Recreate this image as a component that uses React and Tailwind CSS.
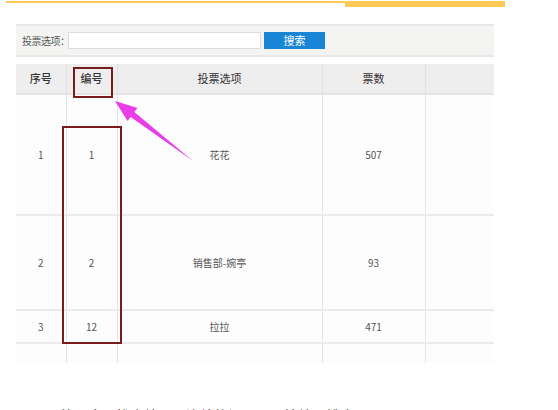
import React from 'react';

const COLS = ['w-[50px]', 'w-[51px]', 'w-[205px]', 'w-[103px]', 'w-[69px]'];

const ROWS = [
  { seq: '1', no: '1', name: '花花', votes: '507', h: 'h-[121px]' },
  { seq: '2', no: '2', name: '销售部-婉亭', votes: '93', h: 'h-[95px]' },
  { seq: '3', no: '12', name: '拉拉', votes: '471', h: 'h-[33px]' },
];

const font = { fontFamily: '"Noto Sans CJK SC", "Liberation Sans", sans-serif' };

export default function App() {
  return (
    <div className="relative w-[558px] h-[410px] overflow-hidden bg-white text-[#444]" style={font}>
      {/* top accent line */}
      <div className="flex items-start pl-[6px] pt-[1px]">
        <div className="w-[339px] h-[2px] bg-[#ffc955]" />
        <div className="w-[160px] h-[6px] bg-[#ffc955]" />
      </div>

      <div className="ml-[16px] w-[478px] mt-[17px]">
        {/* search bar */}
        <div className="h-[33px] border-t-2 border-b-2 border-[#e8e8e8] bg-[#f4f5f3] flex items-center pl-[6px]">
          <span className="text-[10px] text-[#555] w-[46px] whitespace-nowrap tracking-[-0.5px]">投票选项：</span>
          <div className="w-[193px] h-[17px] bg-white border border-[#dcdcdc]" />
          <button className="ml-[3px] w-[61px] h-[17px] bg-[#1a85d7] text-white text-[11px] leading-none flex items-center justify-center">
            搜索
          </button>
        </div>

        {/* table */}
        <table className="mt-[7px] w-[478px] border-collapse table-fixed text-[10px]">
          <thead>
            <tr className="h-[30px] bg-[#efeeef] border-b-2 border-[#e4e3e4] text-[11px] text-[#333]">
              <th className={`${COLS[0]} border-r border-[#e2e2e2] font-medium`}>序号</th>
              <th className={`${COLS[1]} border-r border-[#e2e2e2] font-medium`}>编号</th>
              <th className={`${COLS[2]} border-r border-[#e2e2e2] font-normal`}>投票选项</th>
              <th className={`${COLS[3]} border-r border-[#e2e2e2] font-normal`}>票数</th>
              <th className={COLS[4]}></th>
            </tr>
          </thead>
          <tbody className="bg-[#fdfdfd] text-[#555]">
            {ROWS.map(r => (
              <tr key={r.seq} className={`${r.h} border-b-2 border-[#ebebeb]`}>
                <td className="text-center border-r border-[#e6e6e6]">{r.seq}</td>
                <td className="text-center border-r border-[#e6e6e6]">{r.no}</td>
                <td className="text-center border-r border-[#e6e6e6]">{r.name}</td>
                <td className="text-center border-r border-[#e6e6e6]">{r.votes}</td>
                <td></td>
              </tr>
            ))}
            <tr className="h-[20px]">
              <td className="border-r border-[#e6e6e6]"></td>
              <td className="border-r border-[#e6e6e6]"></td>
              <td className="border-r border-[#e6e6e6]"></td>
              <td className="border-r border-[#e6e6e6]"></td>
              <td></td>
            </tr>
          </tbody>
        </table>

        <p className="mt-[42px] ml-[44px] text-[14px] text-[#333] whitespace-nowrap">第二步：找出编号不连续的记录，再按编号排序</p>
      </div>

      {/* annotations */}
      <div className="absolute left-[73px] top-[67px] w-[40px] h-[31px] border-2 border-[#7b1c1c]" />
      <div className="absolute left-[62px] top-[126px] w-[60px] h-[218px] border-2 border-[#7b1c1c]" />
      <svg className="absolute left-0 top-0 pointer-events-none" width="558" height="410">
        <polygon
          points="115,101 137.4,108.1 134.3,112.1 193,161 130.7,116.9 127.6,120.9"
          fill="#ea3ce7"
        />
      </svg>
    </div>
  );
}
